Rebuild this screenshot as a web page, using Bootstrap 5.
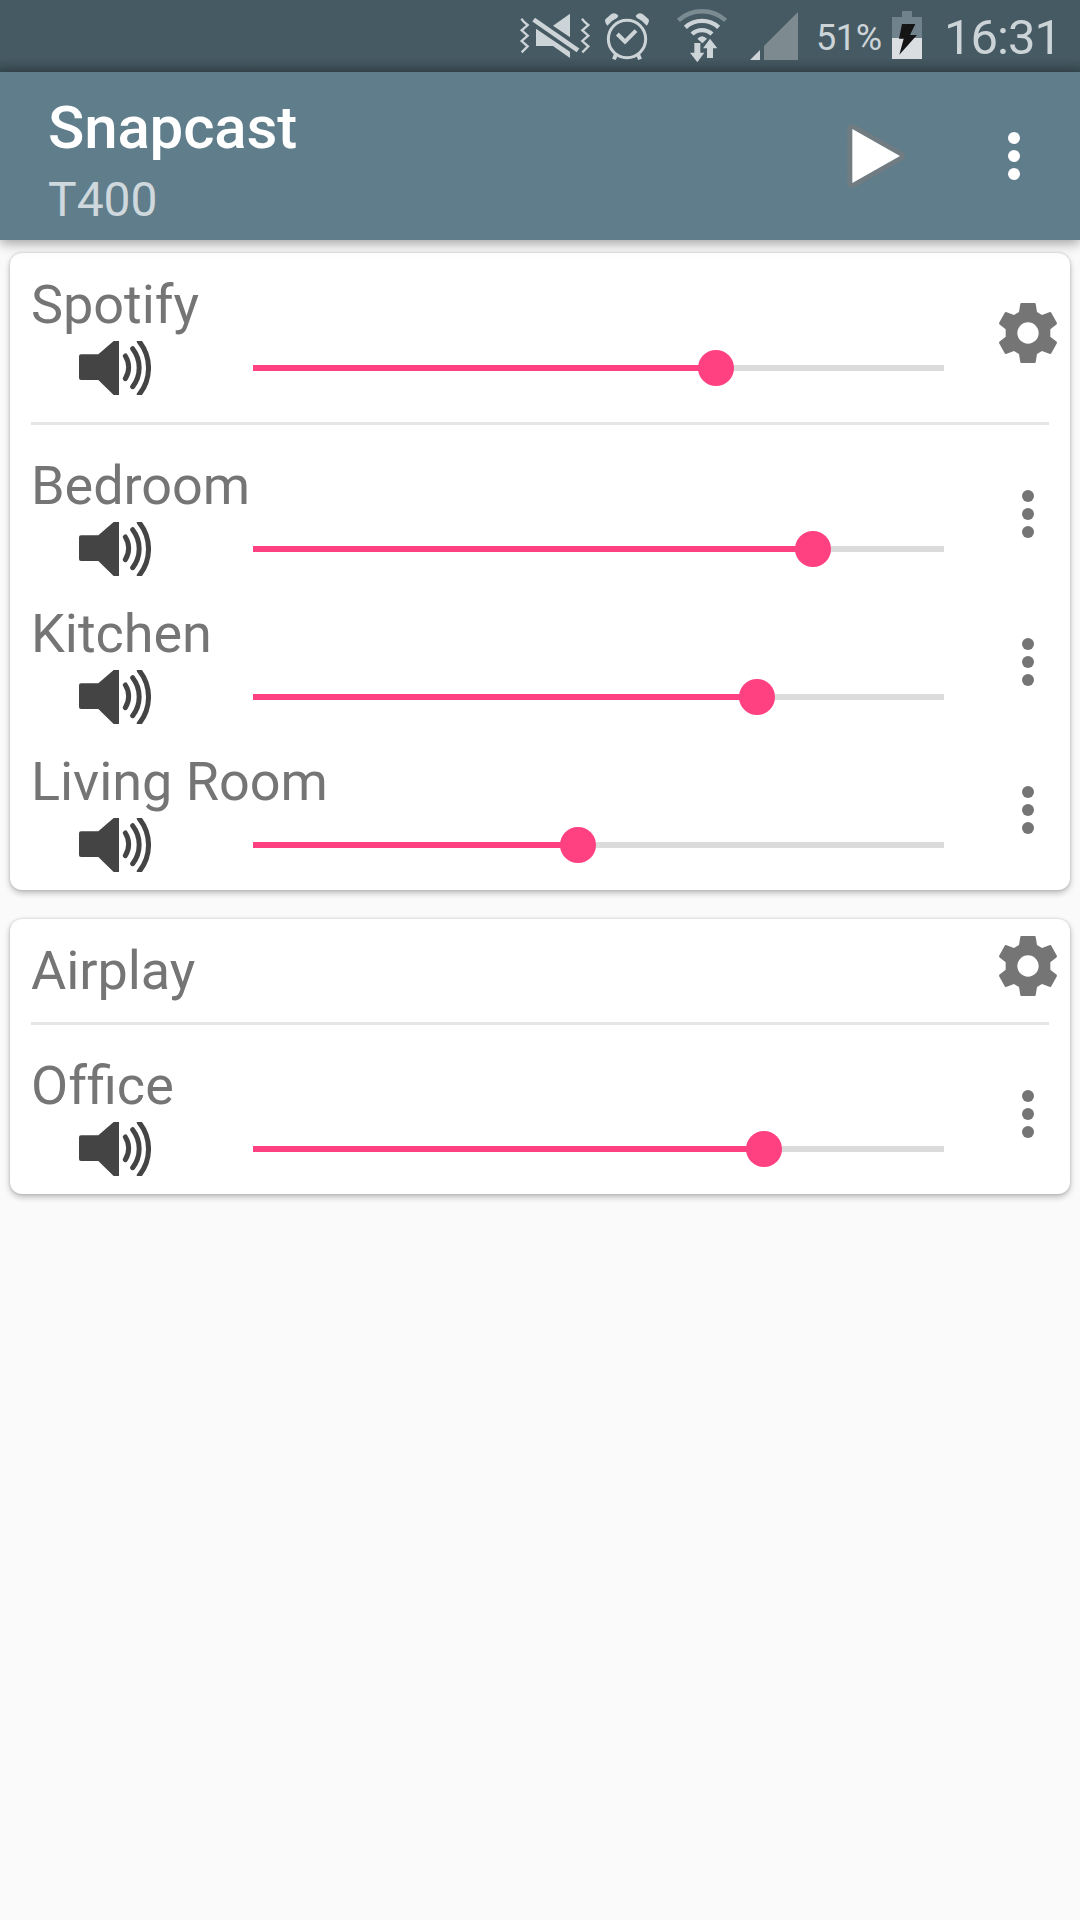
<!DOCTYPE html>
<html lang="en">
<head>
<meta charset="utf-8">
<meta name="viewport" content="width=device-width, initial-scale=1">
<title>Snapcast</title>
<link href="https://cdn.jsdelivr.net/npm/bootstrap@5.3.0/dist/css/bootstrap.min.css" rel="stylesheet">
<style>
  body { font-family: Roboto, "Noto Sans", sans-serif; background: #fafafa; color: #757575; min-height: 1920px; overflow-x: hidden; }
  svg { display: block; flex: none; }
  .status-bar { height: 72px; padding-left: 518px; background: linear-gradient(#465a64 0, #465a64 58px, #3a4b53 72px); color: #cdd4d7; }
  .status-bar svg { height: 72px; }
  .battery-text { font-size: 36px; line-height: 60px; width: 74px; padding-top: 8px; letter-spacing: -.4px; margin-left: 16px; }
  .clock-text { font-size: 49px; line-height: 60px; padding-top: 8px; letter-spacing: -1px; margin-left: 20px; }
  .icon-alarm { margin-left: 10px; }
  .icon-wifi { margin-left: 22px; }
  .icon-signal { margin-left: 18px; }
  .app-bar { height: 168px; background: #607d8b; padding: 0 48px; box-shadow: 0 3px 12px rgba(0,0,0,.38); z-index: 1; }
  .app-title { font-size: 60px; font-weight: 500; line-height: 70px; color: #fff; padding-top: 21px; letter-spacing: -.15px; }
  .app-sub { font-size: 48px; line-height: 56px; color: #cfd8dc; padding-top: 9px; }
  .app-actions { margin-right: -18px; gap: 71px; }
  .group-list { padding: 13px 10px; gap: 29px; }
  .group-card { border: 0; border-radius: 12px; padding-top: 12px; box-shadow: 0 3px 6px rgba(0,0,0,.25), 0 0 3px rgba(0,0,0,.16); }
  .client-row { height: 148px; padding: 4px 6px 0 21px; }
  .client-row.head-only { height: 82px; }
  .client-name { font-size: 54px; line-height: 72px; letter-spacing: -.05px; font-variant-ligatures: common-ligatures; }
  .control-line { height: 54px; padding-left: 48px; padding-right: 48px; gap: 102px; }
  .vol-track { height: 6px; background: #dbdbdb; }
  .vol-fill { height: 6px; background: #ff4081; }
  .vol-thumb { width: 36px; height: 36px; background: #ff4081; }
  .row-action { width: 72px; height: 72px; margin-top: 28px; }
  .head-only .row-action { margin-top: -5px; }
  .group-rule { height: 3px; background: #e5e5e5; margin: 9px 21px 21px; }
</style>
<script src="https://cdn.jsdelivr.net/npm/bootstrap@5.3.0/dist/js/bootstrap.bundle.min.js"></script>
</head>
<body>
<svg width="0" height="0" class="position-absolute" aria-hidden="true">
  <symbol id="speaker" viewBox="0 0 216 162">
    <path fill="#444" d="M6 40H58L104 0H120V162H104L58 117H6Q0 117 0 111V46Q0 40 6 40Z"/>
    <path fill="none" stroke="#444" stroke-width="15" stroke-linecap="round" d="M139 45A63 63 0 0 1 139 113M161 23A93 93 0 0 1 161 137M181 2A127 127 0 0 1 181 160"/>
  </symbol>
  <symbol id="gear" viewBox="-108 -108 216 216">
    <path fill="#757575" fill-rule="evenodd" d="M-21-90H21L23-88 27-63 42-54 66-63 69-62 87-30 86-26 67-11V11L86 26 87 30 69 62 66 63 42 54 27 63 23 88 21 90H-21L-23 88-27 63-42 54-66 63-69 62-87 30-86 26-67 11V-11L-86-26-87-30-69-62-66-63-42-54-27-63-23-88ZM0-32A32 32 0 1 0 0 32A32 32 0 1 0 0-32Z"/>
  </symbol>
  <symbol id="dots" viewBox="-36 -36 72 72">
    <g fill="currentColor"><circle cy="-18" r="6"/><circle r="6"/><circle cy="18" r="6"/></g>
  </symbol>
</svg>

<div class="status-bar d-flex align-items-start">
  <svg width="74" viewBox="54 0 222 216">
    <path fill="none" stroke="#cdd4d7" stroke-width="7" d="M64 56L72 66 83 75 65 91 83 107 65 123 83 139 65 157M246 56L254 66 265 75 247 91 265 107 247 123 265 139 247 157"/>
    <path fill="#cdd4d7" d="M210 41V112L159 77ZM108 86L210 155V174L159 138H108Z"/>
    <path stroke="#cdd4d7" stroke-width="14" d="M101 59L234 151"/>
  </svg>
  <svg class="icon-alarm" width="50" viewBox="306 0 150 216">
    <circle cx="381" cy="117" r="56" fill="none" stroke="#cdd4d7" stroke-width="9"/>
    <path fill="#cdd4d7" d="M322 77Q313 67 316 58L334 42Q347 35 355 47L352 53Q334 61 322 77ZM440 77Q449 67 446 58L428 42Q415 35 407 47L410 53Q428 61 440 77Z"/>
    <path fill="none" stroke="#cdd4d7" stroke-width="12" d="M352 102L375 125 408 92M348 162L342 178M414 162L420 178"/>
  </svg>
  <svg class="icon-wifi" width="56" viewBox="522 0 168 216">
    <g fill="none" stroke="#cdd4d7">
      <path stroke="#7b8b92" stroke-width="13" d="M535 61A106 106 0 0 1 677 61"/>
      <path stroke-width="13" d="M556 82A74 74 0 0 1 656 82"/>
      <path stroke-width="13" d="M576 102A44 44 0 0 1 636 102"/>
    </g>
    <path fill="#cdd4d7" d="M592 116Q606 101 621 116L607 130ZM583 129H601V158H613L592 187 570 158H583ZM630 116L652 145H639V174H621V145H609Z"/>
  </svg>
  <svg class="icon-signal" width="52" viewBox="744 0 156 216">
    <path fill="#7d8b91" d="M894 36V180H792V138Z"/><path fill="#cdd4d7" d="M780 150V180H750Z"/>
  </svg>
  <div class="battery-text">51%</div>
  <svg width="34" viewBox="330 0 102 216">
    <path fill="#70828b" d="M366 33H396V51H426V114H336V51H366Z"/><path fill="#dadee1" d="M336 114H426V177H336Z"/>
    <path fill="#151515" d="M366 72H406L390 105H411L358 164 371 116H357Z"/>
  </svg>
  <div class="clock-text">16:31</div>
</div>

<header class="app-bar d-flex position-relative">
  <div class="flex-grow-1">
    <div class="app-title">Snapcast</div>
    <div class="app-sub">T400</div>
  </div>
  <div class="app-actions d-flex align-items-center text-white">
    <svg width="72" height="72" viewBox="-108 -108 216 216">
      <path d="M-56-81L87 0-56 81Z" fill="#707c82" stroke="#707c82" stroke-width="30" stroke-linejoin="round"/>
      <path d="M-56-81L87 0-56 81Z" fill="#fff"/>
    </svg>
    <svg width="72" height="72"><use href="#dots"/></svg>
  </div>
</header>

<main class="group-list d-flex flex-column">
  <section class="card group-card">
    <div class="client-row d-flex">
      <div class="flex-grow-1">
        <div class="client-name">Spotify</div>
        <div class="control-line d-flex align-items-center">
          <svg width="72" height="54"><use href="#speaker"/></svg>
          <div class="vol-track flex-grow-1 position-relative"><div class="vol-fill" style="width:67%"></div><div class="vol-thumb rounded-circle position-absolute top-50 translate-middle" style="left:67%"></div></div>
        </div>
      </div>
      <svg class="row-action"><use href="#gear"/></svg>
    </div>
    <div class="group-rule"></div>
    <div class="client-row d-flex">
      <div class="flex-grow-1">
        <div class="client-name">Bedroom</div>
        <div class="control-line d-flex align-items-center">
          <svg width="72" height="54"><use href="#speaker"/></svg>
          <div class="vol-track flex-grow-1 position-relative"><div class="vol-fill" style="width:81%"></div><div class="vol-thumb rounded-circle position-absolute top-50 translate-middle" style="left:81%"></div></div>
        </div>
      </div>
      <svg class="row-action"><use href="#dots"/></svg>
    </div>
    <div class="client-row d-flex">
      <div class="flex-grow-1">
        <div class="client-name">Kitchen</div>
        <div class="control-line d-flex align-items-center">
          <svg width="72" height="54"><use href="#speaker"/></svg>
          <div class="vol-track flex-grow-1 position-relative"><div class="vol-fill" style="width:73%"></div><div class="vol-thumb rounded-circle position-absolute top-50 translate-middle" style="left:73%"></div></div>
        </div>
      </div>
      <svg class="row-action"><use href="#dots"/></svg>
    </div>
    <div class="client-row d-flex">
      <div class="flex-grow-1">
        <div class="client-name">Living Room</div>
        <div class="control-line d-flex align-items-center">
          <svg width="72" height="54"><use href="#speaker"/></svg>
          <div class="vol-track flex-grow-1 position-relative"><div class="vol-fill" style="width:47%"></div><div class="vol-thumb rounded-circle position-absolute top-50 translate-middle" style="left:47%"></div></div>
        </div>
      </div>
      <svg class="row-action"><use href="#dots"/></svg>
    </div>
  </section>

  <section class="card group-card">
    <div class="client-row head-only d-flex">
      <div class="flex-grow-1">
        <div class="client-name">Airplay</div>
      </div>
      <svg class="row-action"><use href="#gear"/></svg>
    </div>
    <div class="group-rule"></div>
    <div class="client-row d-flex">
      <div class="flex-grow-1">
        <div class="client-name" style="letter-spacing:0">Of<span class="d-inline-block">fice</span></div>
        <div class="control-line d-flex align-items-center">
          <svg width="72" height="54"><use href="#speaker"/></svg>
          <div class="vol-track flex-grow-1 position-relative"><div class="vol-fill" style="width:74%"></div><div class="vol-thumb rounded-circle position-absolute top-50 translate-middle" style="left:74%"></div></div>
        </div>
      </div>
      <svg class="row-action"><use href="#dots"/></svg>
    </div>
  </section>
</main>
</body>
</html>
